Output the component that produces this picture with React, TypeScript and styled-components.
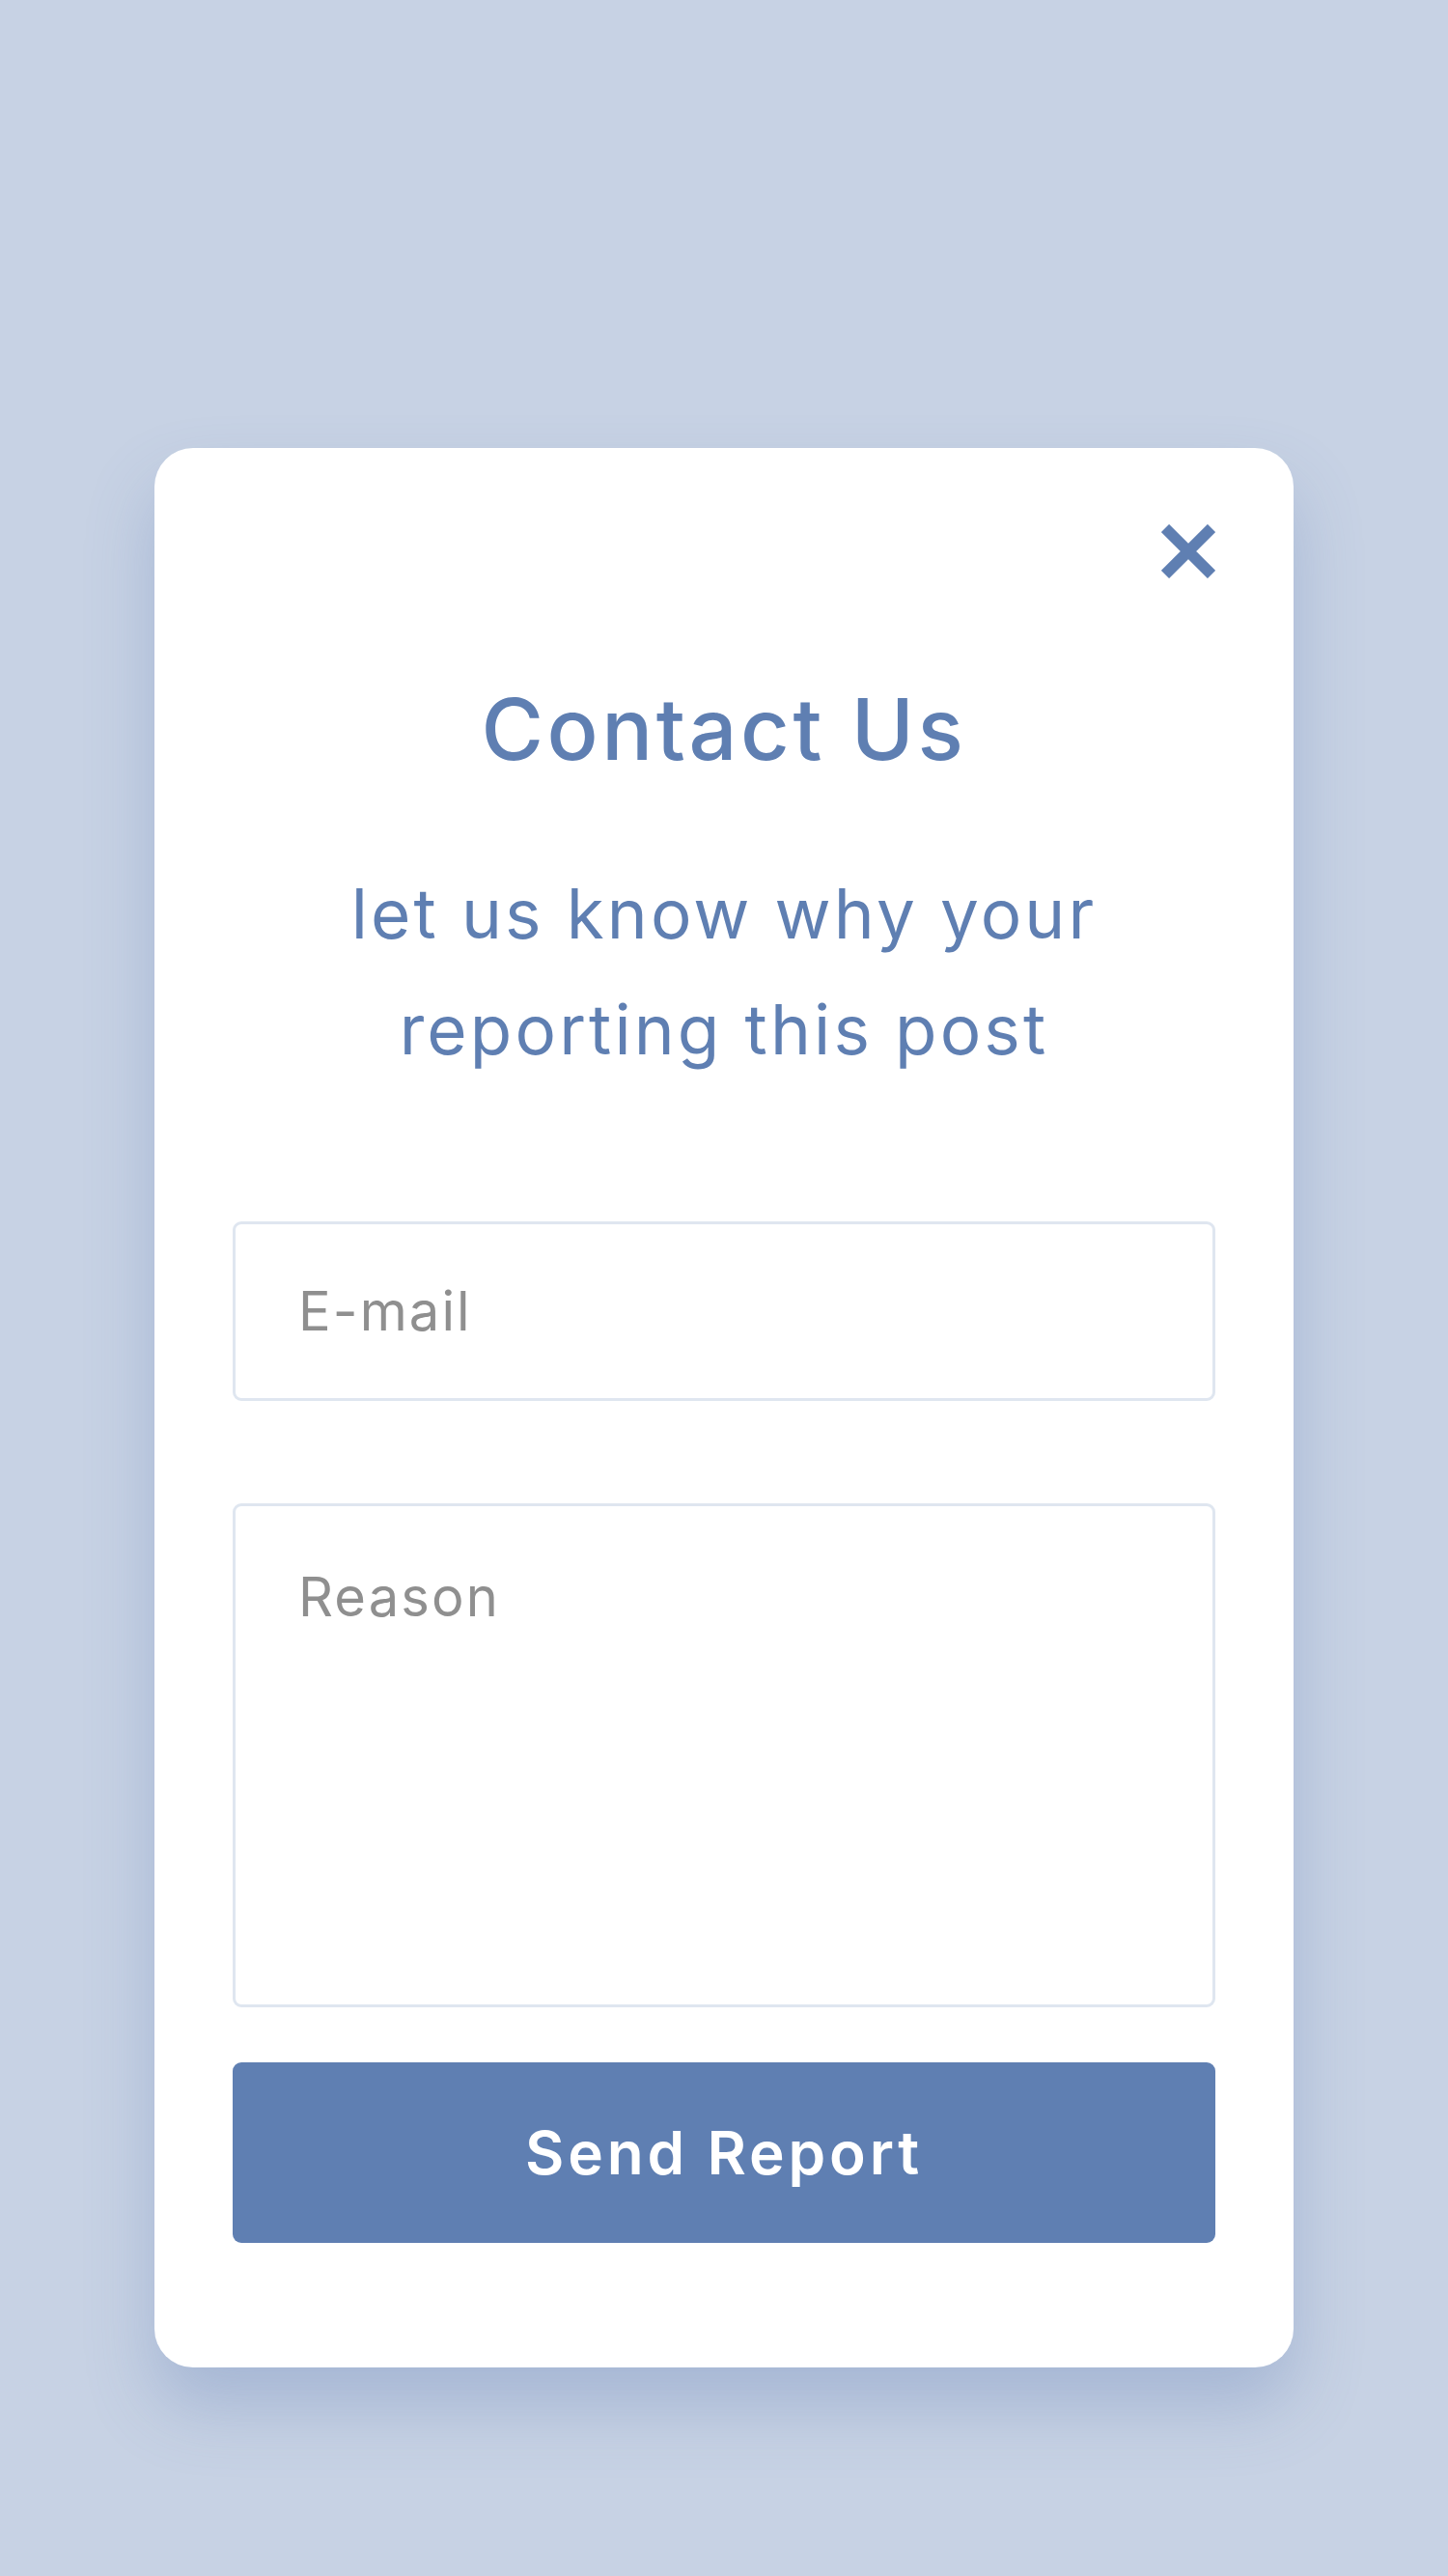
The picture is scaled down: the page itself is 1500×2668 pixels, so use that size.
import React from "react";
import styled, { createGlobalStyle } from "styled-components";

const GlobalStyle = createGlobalStyle`
    html, body {
        margin: 0;
        padding: 0;
        background: #c7d2e4;
    }
    * {
        box-sizing: border-box;
    }
`;

const App = () => {
    return (
        <Page>
            <GlobalStyle />
            <Card>
                <CloseRow>
                    <CloseButton aria-label="Close">
                        <svg width="56" height="56" viewBox="0 0 56 56">
                            <path d="M4 4 L52 52 M52 4 L4 52" stroke="#5f7fb2" strokeWidth="11.5" fill="none" />
                        </svg>
                    </CloseButton>
                </CloseRow>
                <Title>Contact Us</Title>
                <Subtitle>
                    let us know why your
                    <br />
                    reporting this post
                </Subtitle>
                <EmailInput type="email" placeholder="E-mail" />
                <ReasonInput placeholder="Reason" />
                <SendButton>Send Report</SendButton>
            </Card>
        </Page>
    );
};

export default App;

const FONT = `"Inter", "Noto Sans", sans-serif`;
const BLUE = "#5f7fb2";

const Page = styled.div`
    min-height: 100vh;
    display: flex;
    flex-direction: column;
    align-items: center;
    padding-top: 464px;
    font-family: ${FONT};
`;

const Card = styled.div`
    width: 1180px;
    background: #ffffff;
    border-radius: 40px;
    padding: 79px 81px 129px 81px;
    display: flex;
    flex-direction: column;
    box-shadow: 0 40px 70px rgba(90, 120, 175, 0.3);
`;

const CloseRow = styled.div`
    display: flex;
    justify-content: flex-end;
    height: 56px;
`;

const CloseButton = styled.button`
    width: 56px;
    height: 56px;
    padding: 0;
    border: none;
    background: none;
    cursor: pointer;

    svg {
        display: block;
    }
`;

const Title = styled.h1`
    margin: 112px 0 0 0;
    font-family: ${FONT};
    font-size: 88px;
    line-height: 88px;
    font-weight: 500;
    letter-spacing: 0.04em;
    color: ${BLUE};
    text-align: center;
`;

const Subtitle = styled.p`
    margin: 87px 0 0 0;
    font-family: ${FONT};
    font-size: 71px;
    line-height: 120px;
    font-weight: 400;
    letter-spacing: 0.044em;
    color: ${BLUE};
    text-align: center;
`;

const fieldStyles = `
    width: 100%;
    border: 3px solid #dfe6f0;
    border-radius: 9px;
    background: #ffffff;
    font-family: ${FONT};
    font-size: 56px;
    letter-spacing: 0.038em;
    color: #444;
    padding: 0 65px;
    outline: none;

    &::placeholder {
        color: #8f8f8f;
        opacity: 1;
    }
`;

const EmailInput = styled.input`
    ${fieldStyles}
    margin-top: 139px;
    height: 186px;
`;

const ReasonInput = styled.textarea`
    ${fieldStyles}
    margin-top: 106px;
    height: 522px;
    padding-top: 60px;
    resize: none;
    line-height: normal;
`;

const SendButton = styled.button`
    margin-top: 57px;
    width: 100%;
    height: 187px;
    border: none;
    border-radius: 9px;
    background: ${BLUE};
    color: #ffffff;
    font-family: ${FONT};
    font-size: 62px;
    font-weight: 600;
    letter-spacing: 0.062em;
    cursor: pointer;
`;
